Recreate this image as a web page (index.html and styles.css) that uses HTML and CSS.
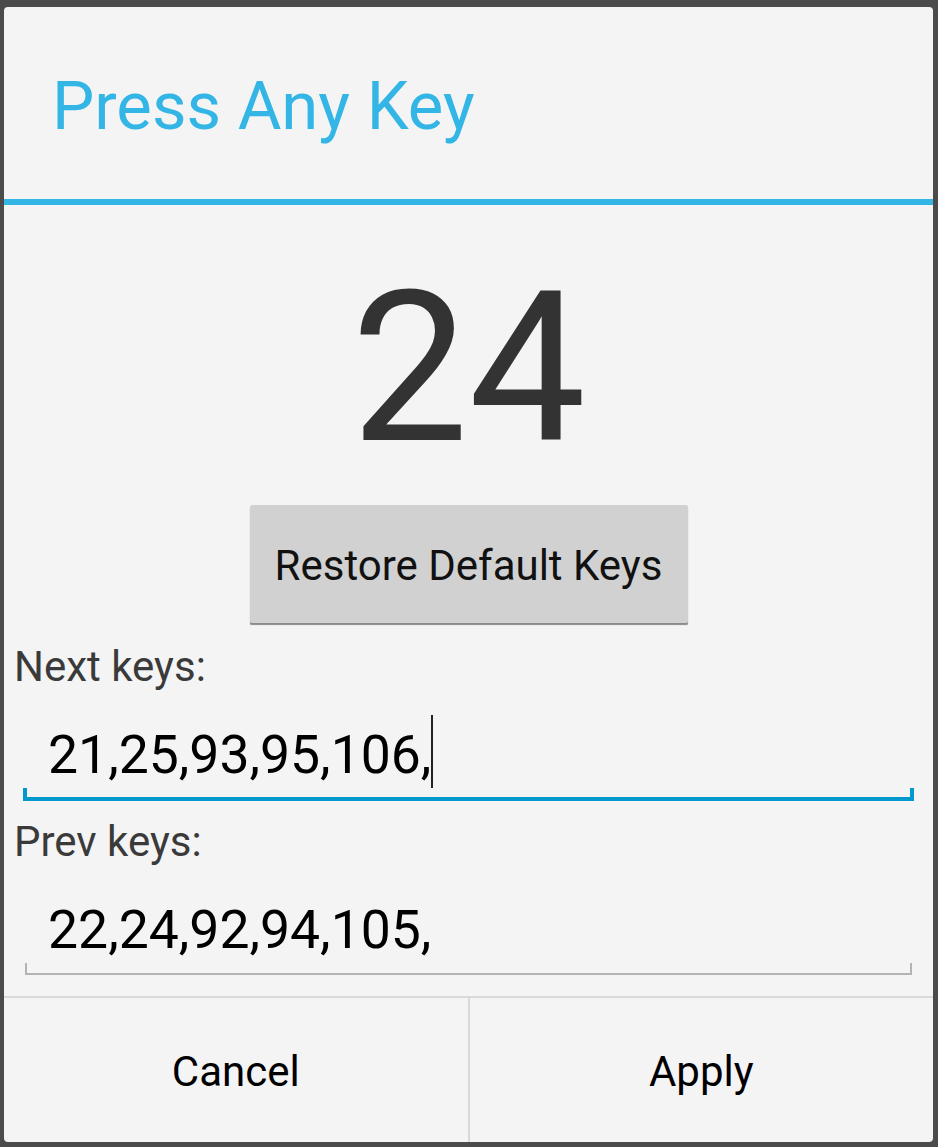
FILE: index.html
```html
<!DOCTYPE html>
<html>
<head>
<meta charset="utf-8">
<link rel="stylesheet" href="styles.css">
</head>
<body>
<div class="dialog">
  <div class="header"><span class="title">Press Any Key</span></div>
  <div class="rule"></div>
  <div class="content">
    <div class="keycode">24</div>
    <div class="restore-wrap"><div class="restore">Restore Default Keys</div></div>
    <div class="label label-next">Next keys:</div>
    <div class="field field-focused">
      <div class="field-text">21,25,93,95,106,<span class="caret"></span></div>
      <div class="field-line"></div>
    </div>
    <div class="label label-prev">Prev keys:</div>
    <div class="field field-idle">
      <div class="field-text">22,24,92,94,105,</div>
      <div class="field-line"></div>
    </div>
  </div>
  <div class="actions">
    <div class="action">Cancel</div>
    <div class="action-sep"></div>
    <div class="action">Apply</div>
  </div>
</div>
</body>
</html>
```

FILE: styles.css
```css
html, body {
  margin: 0;
  padding: 0;
  background: #4b4b4b;
  height: 100%;
}
body {
  font-family: Roboto, "Noto Sans", sans-serif;
  padding-top: 7px;
  padding-left: 4px;
  box-sizing: border-box;
}
.dialog {
  width: 929px;
  height: 1135px;
  background: #f4f4f4;
  border-radius: 4px;
  display: flex;
  flex-direction: column;
  overflow: hidden;
}
.header {
  height: 192px;
  box-sizing: border-box;
  padding-top: 66px;
  padding-left: 48px;
}
.title {
  display: block;
  font-size: 67px;
  line-height: 67px;
  color: #33b5e5;
}
.rule {
  height: 6px;
  background: #33b5e5;
}
.content {
  flex: 1;
  display: flex;
  flex-direction: column;
}
.keycode {
  margin-top: 59px;
  font-size: 209px;
  line-height: 209px;
  color: #333333;
  text-align: center;
}
.restore-wrap {
  display: flex;
  justify-content: center;
  margin-top: 32px;
}
.restore {
  width: 438px;
  height: 118px;
  box-sizing: border-box;
  padding-top: 39.5px;
  background: #d1d1d1;
  border-radius: 2px;
  box-shadow: 0 2px 1px -0.5px #8a8a8a;
  text-align: center;
  font-size: 42px;
  line-height: 42px;
  color: #111;
}
.label {
  font-size: 42px;
  line-height: 42px;
  color: #3a3a3a;
  padding-left: 10px;
}
.label-next { margin-top: 22.5px; }
.label-prev { margin-top: 20.5px; }
.field {
  margin-left: 19px;
  margin-right: 19px;
}
.field-text {
  font-size: 53.5px;
  line-height: 54px;
  color: #000;
  padding-left: 25px;
  margin-top: 40px;
}
.field-focused .field-line {
  margin-top: 6px;
  height: 9px;
  border: 4px solid #0099cc;
  border-top: none;
}
.field-idle .field-line {
  margin-top: 6px;
  margin-left: 2px;
  margin-right: 2px;
  height: 10px;
  border: 2px solid #b3b3b3;
  border-top: none;
}
.caret {
  display: inline-block;
  width: 1.5px;
  height: 73px;
  background: #222;
  vertical-align: -8px;
  margin-top: -13px;
  margin-bottom: -7px;
}
.actions {
  height: 146px;
  border-top: 2px solid #d9d9d9;
  box-sizing: border-box;
  display: flex;
}
.action {
  flex: 1;
  text-align: center;
  font-size: 42px;
  line-height: 42px;
  padding-top: 52.5px;
  color: #000;
}
.action-sep {
  width: 2px;
  background: #d9d9d9;
}
```
